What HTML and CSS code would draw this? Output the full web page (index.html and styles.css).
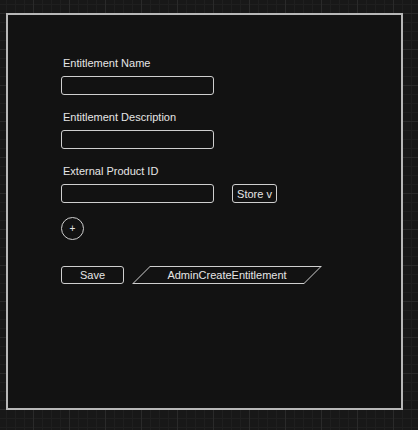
FILE: index.html
```html
<!DOCTYPE html>
<html>
<head>
<meta charset="utf-8">
<link rel="stylesheet" href="styles.css">
</head>
<body>
<div class="frame">
  <div class="form">
    <div class="field">
      <div class="label">Entitlement Name</div>
      <div class="input"></div>
    </div>
    <div class="field">
      <div class="label">Entitlement Description</div>
      <div class="input"></div>
    </div>
    <div class="field">
      <div class="label">External Product ID</div>
      <div class="row">
        <div class="input"></div>
        <div class="store">Store v</div>
      </div>
    </div>
  </div>
  <div class="add">+</div>
  <div class="actions">
    <div class="save">Save</div>
    <div class="para"><span>AdminCreateEntitlement</span></div>
  </div>
</div>
</body>
</html>
```
FILE: styles.css
```css
html, body {
  margin: 0;
  padding: 0;
}
body {
  width: 418px;
  height: 430px;
  overflow: hidden;
  background-color: #181818;
  background-image:
    linear-gradient(to right, #2a2a2a 1px, transparent 1px),
    linear-gradient(to bottom, #2a2a2a 1px, transparent 1px),
    linear-gradient(to right, #1f1f1f 1px, transparent 1px),
    linear-gradient(to bottom, #1f1f1f 1px, transparent 1px);
  background-size: 36px 36px, 36px 36px, 9px 9px, 9px 9px;
  background-position: 33px 13px, 33px 13px, 33px 13px, 33px 13px;
  font-family: "Liberation Sans", Arial, sans-serif;
  font-size: 11px;
  color: #e6e6e6;
}
.frame {
  box-sizing: border-box;
  margin: 13px 0 0 6px;
  width: 397px;
  height: 397px;
  border: 2px solid #b8b8b8;
  background: #121212;
  padding: 41px 0 0 53px;
  display: flex;
  flex-direction: column;
  align-items: flex-start;
}
.form {
  display: flex;
  flex-direction: column;
  gap: 15px;
}
.field {
  display: flex;
  flex-direction: column;
  gap: 6px;
}
.label {
  line-height: 14px;
  padding-left: 2px;
}
.input {
  box-sizing: border-box;
  width: 153px;
  height: 19px;
  border: 1px solid #cfcfcf;
  border-radius: 3px;
}
.row {
  display: flex;
  align-items: center;
  gap: 18px;
}
.store {
  box-sizing: border-box;
  width: 45px;
  height: 19px;
  border: 1px solid #cfcfcf;
  border-radius: 3px;
  display: flex;
  align-items: center;
  justify-content: center;
  font-size: 11px;
}
.add {
  box-sizing: border-box;
  margin-top: 14px;
  width: 23px;
  height: 23px;
  border: 1px solid #cfcfcf;
  border-radius: 50%;
  display: flex;
  align-items: center;
  justify-content: center;
  font-size: 10px;
  line-height: 1;
  padding-top: 1px;
}
.actions {
  margin-top: 26px;
  display: flex;
  align-items: center;
  gap: 17px;
}
.save {
  box-sizing: border-box;
  width: 63px;
  height: 18px;
  border: 1px solid #cfcfcf;
  border-radius: 3px;
  display: flex;
  align-items: center;
  justify-content: center;
}
.para {
  position: relative;
  width: 172px;
  height: 18px;
  display: flex;
  align-items: center;
  justify-content: center;
}
.para::before {
  content: "";
  position: absolute;
  inset: 0;
  border: 1px solid #cfcfcf;
  transform: skewX(-45deg);
}
.para span {
  position: relative;
}
```
